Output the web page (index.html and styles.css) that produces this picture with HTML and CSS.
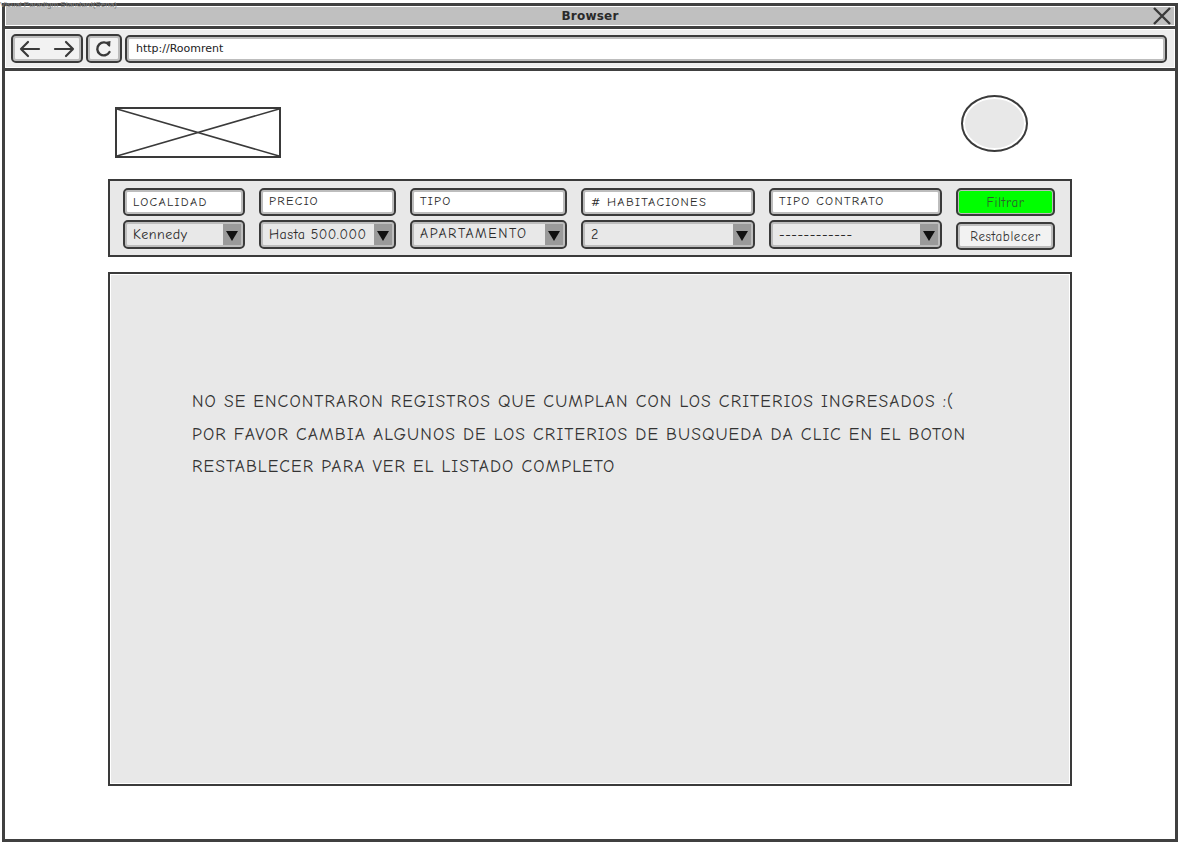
FILE: index.html
```html
<!DOCTYPE html>
<html lang="es">
<head>
<meta charset="utf-8">
<title>Roomrent</title>
<link rel="stylesheet" href="styles.css">
</head>
<body>
<div class="watermark">Visual Paradigm Standard(Sena)</div>
<div class="window">
  <div class="titlebar">
    <span class="title">Browser</span>
    <svg class="close" width="20" height="18" viewBox="0 0 20 18"><path d="M2 1 L18 17 M18 1 L2 17" stroke="#3a3a3a" stroke-width="2.4" fill="none"/></svg>
  </div>
  <div class="toolbar">
    <div class="tbtn navbtn">
      <svg width="60" height="20" viewBox="0 0 60 20"><path d="M4 10 H22 M4 10 L11 3 M4 10 L11 17" stroke="#3a3a3a" stroke-width="2.2" fill="none" stroke-linecap="round" stroke-linejoin="round"/><path d="M38 10 H56 M56 10 L49 3 M56 10 L49 17" stroke="#3a3a3a" stroke-width="2.2" fill="none" stroke-linecap="round" stroke-linejoin="round"/></svg>
    </div>
    <div class="tbtn refresh">
      <svg width="20" height="20" viewBox="0 0 20 20"><path d="M15 6 A6.5 6.5 0 1 0 15.5 13" stroke="#3a3a3a" stroke-width="2.4" fill="none" stroke-linecap="round"/><path d="M11 3 L16.5 2 L16 8 Z" fill="#3a3a3a"/></svg>
    </div>
    <div class="url">http://Roomrent</div>
  </div>
  <div class="page">
    <div class="header">
      <svg class="logo" width="166" height="51" viewBox="0 0 166 51"><rect x="1" y="1" width="164" height="49" fill="#fff" stroke="#3a3a3a" stroke-width="2"/><path d="M2 2 L164 49 M164 2 L2 49" stroke="#3a3a3a" stroke-width="1.6"/></svg>
      <div class="avatar"></div>
    </div>
    <div class="filters">
      <div class="col c1"><div class="field">LOCALIDAD</div><div class="select">Kennedy<span class="arrow"></span></div></div>
      <div class="col c2"><div class="field up">PRECIO</div><div class="select">Hasta 500.000<span class="arrow"></span></div></div>
      <div class="col c3"><div class="field up">TIPO</div><div class="select up caps">APARTAMENTO<span class="arrow"></span></div></div>
      <div class="col c4"><div class="field">#&nbsp;HABITACIONES</div><div class="select">2<span class="arrow"></span></div></div>
      <div class="col c5"><div class="field up">TIPO CONTRATO</div><div class="select">------------<span class="arrow"></span></div></div>
      <div class="col c6"><div class="btn green">Filtrar</div><div class="btn plain">Restablecer</div></div>
    </div>
    <div class="results">
      <p class="msg">NO SE ENCONTRARON REGISTROS QUE CUMPLAN CON LOS CRITERIOS INGRESADOS :(<br>POR FAVOR CAMBIA ALGUNOS DE LOS CRITERIOS DE BUSQUEDA DA CLIC EN EL BOTON<br>RESTABLECER PARA VER EL LISTADO COMPLETO</p>
    </div>
  </div>
</div>
</body>
</html>
```
FILE: styles.css
```css
html, body {
  margin: 0;
  padding: 0;
  background: #fff;
}
body {
  font-family: "Comic Sans MS", "Comic Neue", "Open Sans", "Liberation Sans", sans-serif;
  color: #333;
}
.watermark {
  position: absolute;
  left: 0;
  top: 1px;
  font-family: "Liberation Sans", sans-serif;
  font-size: 8px;
  color: #808080;
  line-height: 8px;
  white-space: nowrap;
  z-index: 2;
}
.window {
  box-sizing: border-box;
  margin: 3px 4px 0 2px;
  height: 839px;
  border: 3px solid #404040;
  display: flex;
  flex-direction: column;
  background: #fff;
}
.titlebar {
  margin: 1px;
  height: 18px;
  background: #c0c0c0;
  display: flex;
  align-items: center;
  justify-content: center;
  position: relative;
}
.title {
  font-family: "DejaVu Sans", sans-serif;
  font-weight: bold;
  font-size: 12px;
  color: #2a2a2a;
  letter-spacing: 0.2px;
}
.close {
  position: absolute;
  right: 2px;
  top: 0;
}
.toolbar {
  border-top: 3px solid #404040;
  border-bottom: 3px solid #404040;
  height: 39px;
  background: #ededed;
  box-shadow: inset 0 0 0 1px #fff;
  display: flex;
  align-items: center;
  padding: 0 8px 0 6px;
  gap: 3px;
}
.tbtn, .url, .field, .select, .btn {
  box-sizing: border-box;
  border: 2px solid #3a3a3a;
  border-radius: 5px;
  box-shadow: inset 0 0 0 2px #bdbdbd;
}
.tbtn {
  height: 29px;
  background: #f2f2f2;
  display: flex;
  align-items: center;
  justify-content: center;
}
.navbtn { width: 72px; }
.refresh { width: 36px; }
.url {
  flex: 1;
  height: 28px;
  background: #fff;
  font-family: "DejaVu Sans", sans-serif;
  font-size: 11px;
  color: #222;
  display: flex;
  align-items: center;
  padding-left: 9px;
}
.page {
  flex: 1;
  padding: 24px 0 0 103px;
}
.header {
  width: 964px;
  display: flex;
  justify-content: space-between;
  align-items: flex-start;
  box-sizing: border-box;
  padding: 0 44px 0 7px;
}
.logo {
  display: block;
  margin-top: 12px;
}
.avatar {
  box-sizing: border-box;
  width: 67px;
  height: 57px;
  border: 2px solid #3a3a3a;
  border-radius: 50%;
  background: #e8e8e8;
  box-shadow: inset 0 0 0 2px #fff;
}
.filters {
  box-sizing: border-box;
  margin-top: 21px;
  width: 964px;
  height: 78px;
  border: 2px solid #3a3a3a;
  background: #e8e8e8;
  display: flex;
  gap: 14px;
  padding: 7px 0 0 13px;
}
.col {
  display: flex;
  flex-direction: column;
  gap: 4px;
}
.c1 { width: 122px; }
.c2 { width: 137px; }
.c3 { width: 157px; }
.c4 { width: 174px; }
.c5 { width: 173px; }
.c6 { width: 99px; gap: 6px; }
.field {
  height: 28px;
  background: #fff;
  font-size: 12.5px;
  letter-spacing: 1.3px;
  color: #2a2a2a;
  display: flex;
  align-items: center;
  padding-left: 8px;
  white-space: nowrap;
}
.field.up { align-items: flex-start; padding-top: 4px; }
.select {
  height: 29px;
  background: #e8e8e8;
  font-size: 14px;
  letter-spacing: 0.5px;
  color: #2a2a2a;
  display: flex;
  align-items: center;
  padding-left: 8px;
  position: relative;
  white-space: nowrap;
}
.select.caps { letter-spacing: 1.5px; }
.select.up { align-items: flex-start; padding-top: 3px; }
.arrow {
  position: absolute;
  right: 2px;
  top: 2px;
  bottom: 2px;
  width: 18px;
  background: #9a9a9a;
}
.arrow::after {
  content: "";
  position: absolute;
  left: 3px;
  top: 7px;
  border-left: 6px solid transparent;
  border-right: 6px solid transparent;
  border-top: 10px solid #111;
}
.btn {
  height: 28px;
  display: flex;
  align-items: center;
  justify-content: center;
  font-size: 13px;
  letter-spacing: 0.6px;
  color: #333;
}
.btn.green {
  background: #00ff00;
  box-shadow: inset 0 0 0 1px #bdbdbd;
  color: #2e5c2e;
}
.btn.plain { background: #f2f2f2; }
.results {
  box-sizing: border-box;
  margin-top: 15px;
  width: 964px;
  height: 514px;
  border: 2px solid #3a3a3a;
  background: #e8e8e8;
  box-shadow: inset 0 0 0 1px #fff;
  padding: 111px 0 0 82px;
}
.msg {
  margin: 0;
  font-size: 17.5px;
  letter-spacing: 1.1px;
  line-height: 32.5px;
  color: #333;
  white-space: nowrap;
}
```
